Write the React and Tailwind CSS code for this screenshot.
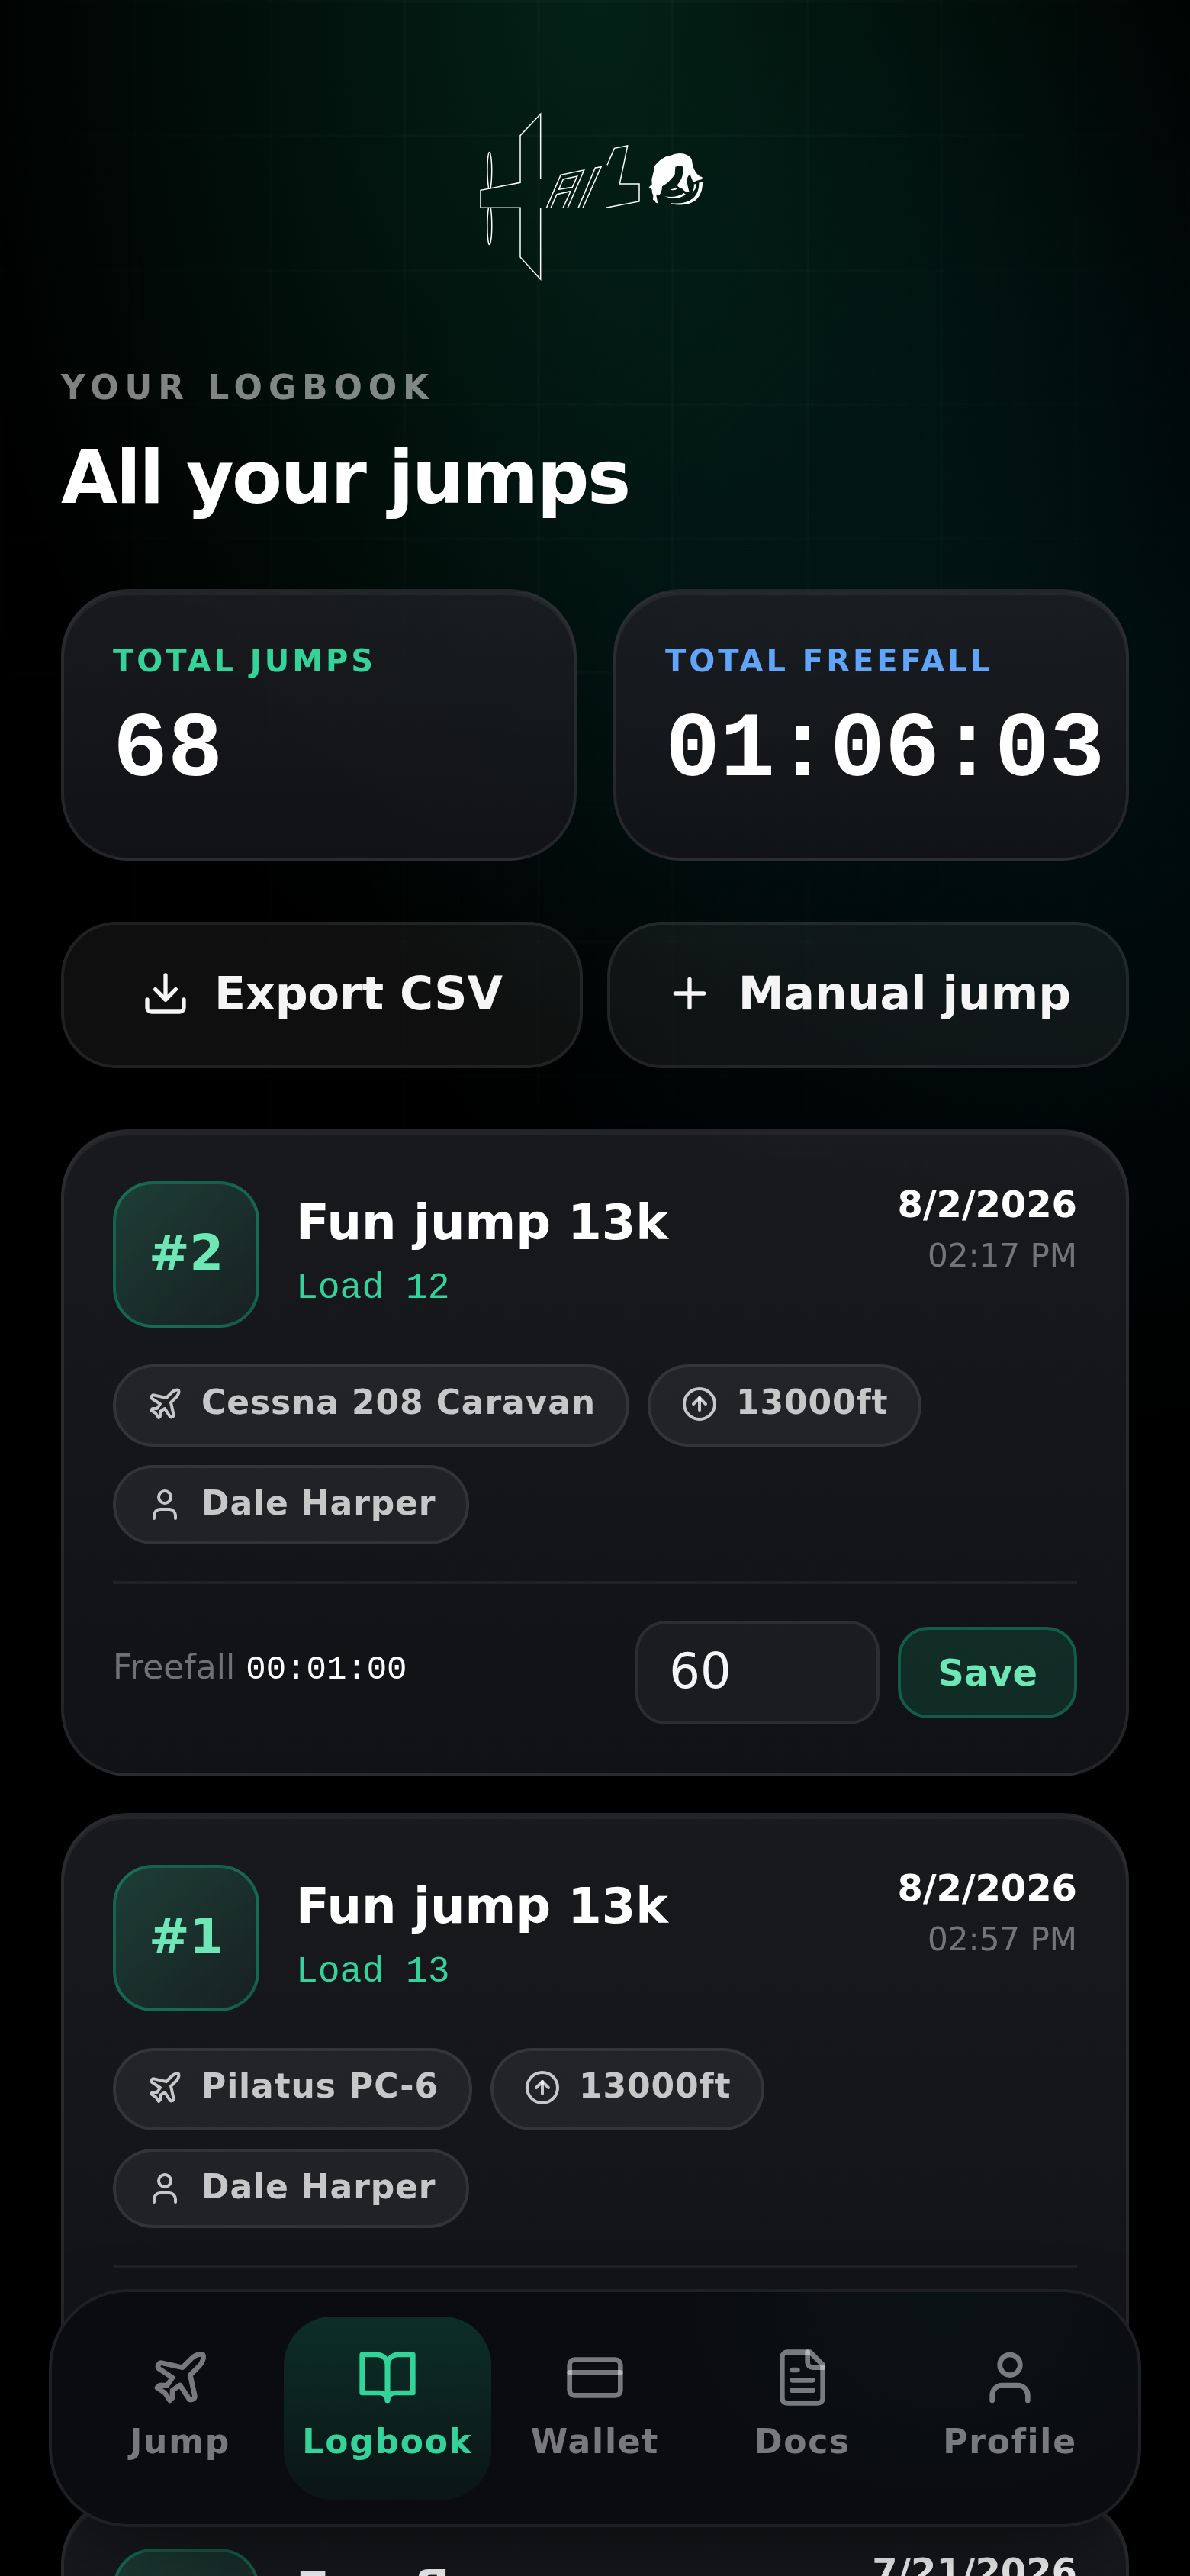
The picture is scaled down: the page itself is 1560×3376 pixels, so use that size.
import { useState } from "react";
import { CircleArrowUp, CreditCard, Download, Plane, Plus, User } from "lucide-react";

const JUMPS = [
  { id: 2, title: "Fun jump 13k", load: "Load 12", date: "8/2/2026", time: "02:17 PM", aircraft: "Cessna 208 Caravan", altitude: "13000ft", pilot: "Dale Harper", freefall: "00:01:00", seconds: "60" },
  { id: 1, title: "Fun jump 13k", load: "Load 13", date: "8/2/2026", time: "02:57 PM", aircraft: "Pilatus PC-6", altitude: "13000ft", pilot: "Dale Harper", freefall: "00:01:00", seconds: "60" },
  { id: 3, title: "Fun fly", load: "Load 4", date: "7/21/2026", time: "11:20 AM", aircraft: "Pilatus PC-6", altitude: "13000ft", pilot: "Dale Harper", freefall: "00:01:00", seconds: "60" },
];

const MONO = "font-['Liberation_Mono',monospace]";

const CARD =
  "rounded-[88px] border-4 border-white/8 bg-linear-to-b from-[rgba(31,32,37,0.8)] to-[rgba(20,21,25,0.85)] shadow-[inset_0_4px_0_rgba(255,255,255,0.05)]";

function Backdrop() {
  return (
    <div aria-hidden="true" className="pointer-events-none fixed inset-0">
      <div className="absolute inset-0 bg-[radial-gradient(ellipse_55%_40%_at_50%_0%,rgba(16,185,129,0.18),transparent)]" />
      <div className="absolute inset-0 bg-[radial-gradient(ellipse_58%_29%_at_86%_27%,rgba(6,182,190,0.09),transparent)]" />
      <div className="absolute inset-0 bg-[linear-gradient(rgba(255,255,255,0.02)_4px,transparent_4px),linear-gradient(90deg,rgba(255,255,255,0.02)_4px,transparent_4px)] bg-size-[176px_176px] mask-[radial-gradient(ellipse_60%_50%_at_50%_5%,black_20%,transparent)]" />
    </div>
  );
}

function Logo() {
  return (
    <svg viewBox="72 42 936 672" className="h-56 w-78 text-white" role="img" aria-label="Logo">
      <g fill="none" stroke="currentColor" strokeWidth="4.5">
        <path d="M326 312V58L246 143V328L90 358V427H246V621L326 708V428" />
        <path d="M122 352C115 310 115 240 122 212Q125 205 128 212C136 240 136 310 129 352" />
        <path d="M121 428C115 470 115 540 122 568Q125 575 128 568C136 540 136 470 130 428" />
        <path d="M349 428L405 298L497 279L432 428M366 428L390 374L444 362L414 428M415 315L470 303L451 346L397 355Z" />
        <path d="M474 428L541 270L564 266L492 428" />
        <path d="M588 259L616 193L668 183L637 333H714V402L583 427" />
      </g>
      <g fill="currentColor">
        <path d="M775 262C790 242 812 224 838 221Q858 211 884 214C905 218 921 228 922 246C925 272 938 300 962 307L961 315Q942 318 926 327L914 296Q900 303 902 327Q906 350 911 365Q895 368 883 352Q868 348 863 338Q880 318 884 300L888 266Q872 261 856 266L854 296Q833 326 804 343Q804 362 794 376L781 378L787 410L778 406L776 398L768 396L769 376Q764 372 764 356L752 346L764 335L763 315Q770 290 775 262Z" />
        <path d="M840 409Q896 414 925 390Q950 368 949 328L963 327Q964 370 937 397Q900 424 840 412Z" />
        <path d="M812 381Q855 391 890 369L897 375Q860 401 812 381Z" />
        <path d="M835 355Q850 354 857 347L866 350Q852 362 835 355Z" />
        <path d="M921 368Q932 350 929 335L938 332Q939 355 921 368Z" />
      </g>
    </svg>
  );
}

function DocsIcon({ className }) {
  return (
    <svg viewBox="0 0 24 24" className={className} fill="none" stroke="currentColor" strokeWidth="2" strokeLinecap="round" strokeLinejoin="round" aria-hidden="true">
      <path d="M15 2H6a2 2 0 0 0-2 2v16a2 2 0 0 0 2 2h12a2 2 0 0 0 2-2V7Z" />
      <path d="M14 2v4a2 2 0 0 0 2 2h4" />
      <path d="M10 9H8" />
      <path d="M16 13H8" />
      <path d="M16 17H8" />
    </svg>
  );
}

function BookIcon({ className }) {
  return (
    <svg viewBox="0 0 24 24" className={className} fill="none" stroke="currentColor" strokeWidth="2" strokeLinecap="round" strokeLinejoin="round" aria-hidden="true">
      <path d="M2 3h6a4 4 0 0 1 4 4v14a3 3 0 0 0-3-3H2z" />
      <path d="M22 3h-6a4 4 0 0 0-4 4v14a3 3 0 0 1 3-3h7z" />
    </svg>
  );
}

function StatCard({ label, value, labelClass }) {
  return (
    <div className={`${CARD} min-w-0 p-16`}>
      <p className={`text-[40px] leading-[52px] font-bold tracking-[0.1em] uppercase ${labelClass}`}>{label}</p>
      <p className={`mt-4 text-[120px] leading-[152px] font-bold text-white ${MONO}`}>{value}</p>
    </div>
  );
}

function ActionButton({ icon: Icon, children }) {
  return (
    <button
      type="button"
      className="flex h-48 items-center justify-center gap-8 rounded-[72px] border-4 border-white/8 bg-white/6 pb-1 text-[60px] leading-[72px] font-bold text-neutral-100"
    >
      <Icon className="size-16 shrink-0" />
      {children}
    </button>
  );
}

function Chip({ icon: Icon, className = "pb-6", children }) {
  return (
    <li className={`flex items-start gap-6 rounded-[56px] border-4 border-white/8 bg-white/6 px-10 pt-5 text-[44px] leading-[52px] font-bold tracking-[0.02em] text-white/75 ${className}`}>
      <Icon className="mt-1 size-12 shrink-0" />
      {children}
    </li>
  );
}

function JumpCard({ jump }) {
  const [seconds, setSeconds] = useState(jump.seconds);
  const inputId = `freefall-${jump.id}`;

  return (
    <article className={`${CARD} p-16`}>
      <div className="flex items-start gap-12">
        <div className="grid size-48 shrink-0 place-items-center rounded-[52px] border-4 border-[#10b981]/40 bg-linear-to-br from-[#34d399]/20 to-[#34d399]/5 pb-1 text-[64px] leading-[76px] font-bold text-[#6ee7b7]">
          #{jump.id}
        </div>
        <div className="min-w-0 flex-1 self-center">
          <h2 className="text-[64px] leading-19 font-bold text-white">{jump.title}</h2>
          <p className={`mt-3 text-[48px] leading-18 text-[#34d399] ${MONO}`}>{jump.load}</p>
        </div>
        <div className="text-right">
          <p className="text-[48px] leading-15 font-bold text-white">{jump.date}</p>
          <p className="mt-2 text-[42px] leading-15 text-white/40">{jump.time}</p>
        </div>
      </div>

      <ul className="mt-12 flex flex-wrap gap-6">
        <Chip icon={Plane}>{jump.aircraft}</Chip>
        <Chip icon={CircleArrowUp} className="pb-7">{jump.altitude}</Chip>
        <Chip icon={User}>{jump.pilot}</Chip>
      </ul>

      <div className="mt-12 flex items-center justify-between border-t-4 border-white/6 pt-12">
        <label htmlFor={inputId} className="pb-3 text-[44px] leading-[52px] text-white/40">
          Freefall <span className={`text-white ${MONO}`}>{jump.freefall}</span>
        </label>
        <div className="flex items-center gap-6">
          <input
            id={inputId}
            type="text"
            inputMode="numeric"
            value={seconds}
            onChange={(e) => setSeconds(e.target.value)}
            className="h-34 w-80 rounded-[40px] border-4 border-white/8 bg-white/4 px-10 pb-1 text-[64px] text-neutral-100"
          />
          <button
            type="button"
            className="rounded-[40px] border-4 border-[#10b981]/35 bg-[#10b981]/15 px-12 py-7 text-[48px] leading-14 font-bold text-[#6ee7b7]"
          >
            Save
          </button>
        </div>
      </div>
    </article>
  );
}

const TABS = [
  { label: "Jump", icon: Plane },
  { label: "Logbook", icon: BookIcon, active: true },
  { label: "Wallet", icon: CreditCard },
  { label: "Docs", icon: DocsIcon },
  { label: "Profile", icon: User },
];

function TabBar() {
  return (
    <nav className="fixed inset-x-16 bottom-16 grid grid-cols-5 rounded-[104px] border-4 border-[#1f2023] bg-[#0b0c10] bg-[radial-gradient(ellipse_24%_80%_at_82%_10%,rgba(16,185,129,0.04),transparent)] p-8 shadow-[0_48px_120px_-32px_rgba(0,0,0,0.6)]">
      {TABS.map(({ label, icon: Icon, active }) => (
        <a
          key={label}
          href={`#${label.toLowerCase()}`}
          aria-current={active ? "page" : undefined}
          className={`flex flex-col items-center gap-4 rounded-[64px] pt-10 pb-12 text-[44px] leading-14 font-bold tracking-[0.04em] ${
            active ? "bg-linear-to-b from-[#10b981]/20 to-[#10b981]/5 text-[#34d399]" : "text-white/45"
          }`}
        >
          <Icon className="size-20" />
          {label}
        </a>
      ))}
    </nav>
  );
}

export default function App() {
  return (
    <div className="h-screen overflow-y-auto bg-black font-['DejaVu_Sans',sans-serif] text-white [scrollbar-width:none]">
      <Backdrop />
      <main className="relative px-20 pt-36 pb-[440px]">
        <header>
          <div className="flex justify-center">
            <Logo />
          </div>
          <p className="mt-27 text-[44px] leading-16 font-bold tracking-[0.18em] text-white/50 uppercase">Your logbook</p>
          <h1 className="mt-8 text-[96px] leading-27 font-bold tracking-tight">All your jumps</h1>
        </header>

        <section className="mt-23 grid grid-cols-2 gap-12">
          <StatCard label="Total jumps" value="68" labelClass="text-[#34d399]" />
          <StatCard label="Total freefall" value="01:06:03" labelClass="text-[#60a5fa]" />
        </section>

        <div className="mt-20 grid grid-cols-2 gap-8">
          <ActionButton icon={Download}>Export CSV</ActionButton>
          <ActionButton icon={Plus}>Manual jump</ActionButton>
        </div>

        <section className="mt-20 flex flex-col gap-12">
          {JUMPS.map((jump) => (
            <JumpCard key={jump.id} jump={jump} />
          ))}
        </section>
      </main>
      <TabBar />
    </div>
  );
}
